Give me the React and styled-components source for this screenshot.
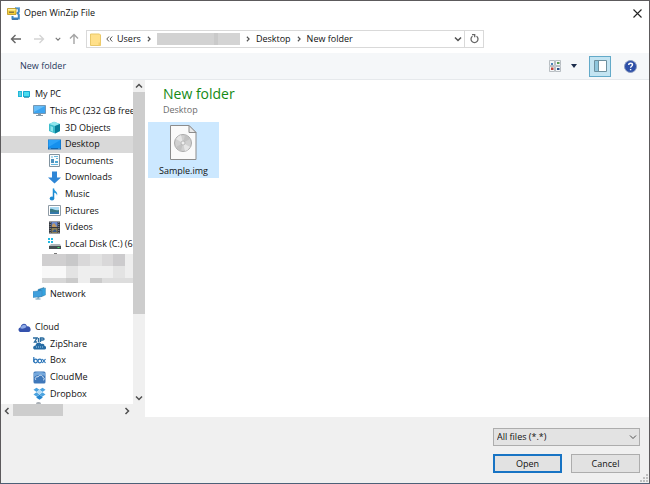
import React from 'react';
import styled, { createGlobalStyle } from 'styled-components';

const GlobalStyle = createGlobalStyle`
  * {
    box-sizing: border-box;
  }

  body {
    margin: 0;
    font-family: 'Open Sans', 'Noto Sans', sans-serif;
    font-size: 9px;
    line-height: 16px;
    color: #111;
  }

  button, select {
    font: inherit;
    color: inherit;
  }

  ul {
    list-style: none;
    margin: 0;
    padding: 0;
  }

  svg {
    display: block;
    flex: none;
  }
`;

const Dialog = styled.div`
  height: 100vh;
  display: flex;
  flex-direction: column;
  background: #fff;
  border: 1px solid #5c5a5c;
  border-bottom-color: #4c6078;
`;

const TitleBar = styled.header`
  display: flex;
  align-items: center;
  height: 24px;
  padding: 0 6px;
`;

const Title = styled.h1`
  flex: 1;
  margin: 0 0 0 4px;
  font-size: 9px;
  font-weight: 400;
`;

const IconButton = styled.button`
  display: flex;
  align-items: center;
  justify-content: center;
  width: ${props => props.$width || 12}px;
  height: 20px;
  padding: 0;
  border: 0;
  background: none;
`;

const NavBar = styled.nav`
  display: flex;
  align-items: center;
  height: 28px;
  padding: 0 8px;
`;

const AddressBar = styled.div`
  display: flex;
  align-items: center;
  flex: 0 1 398px;
  height: 18px;
  padding-left: 3px;
  border: 1px solid #d9d9d9;
`;

const Crumb = styled.button`
  border: 0;
  padding: 0;
  background: none;
  white-space: nowrap;
`;

const Separator = styled.span`
  display: flex;
  justify-content: center;
  width: 16px;
`;

const Redacted = styled.div`
  width: 83px;
  height: 12px;
  background: linear-gradient(90deg, #d2d2d2 0 57px, #c9c9c9 57px 61px, #d4d4d4 61px);
`;

const Spacer = styled.div`
  flex: 1;
`;

const Refresh = styled(IconButton)`
  height: 16px;
  border-left: 1px solid #d9d9d9;
`;

const Toolbar = styled.div`
  display: flex;
  align-items: center;
  height: 27px;
  padding: 0 12px 0 19px;
  background: #f5f7f9;
  border-bottom: 1px solid #e6e9ec;
`;

const ToolbarButton = styled.button`
  border: 0;
  padding: 0;
  background: none;
  color: #26375c;
`;

const PaneToggle = styled(IconButton)`
  height: 21px;
  margin: 0 13px 0 2px;
  border: 1px solid #63aac9;
  background: #c3e4f2;
`;

const Body = styled.div`
  display: flex;
  flex: 1;
  min-height: 0;
`;

const Sidebar = styled.aside`
  display: grid;
  grid-template-columns: 1fr 12px;
  grid-template-rows: 1fr 13px;
  width: 144px;
`;

const TreeView = styled.div`
  min-width: 0;
  overflow: hidden;
  padding-top: 6px;
  display: flex;
  flex-direction: column;
`;

const Tree = styled.ul`
  flex: 1;
  display: grid;
  grid-auto-rows: 1fr;
`;

const TreeItem = styled.li`
  display: flex;
  align-items: center;
  gap: 4px;
  min-height: 0;
  padding-left: ${props => 17 + props.$level * 15}px;
  background: ${props => (props.$selected ? '#d9d9d9' : 'none')};
  white-space: nowrap;
`;

const RedactedItem = styled.li`
  grid-row: span 2;
  min-height: 0;
  padding: 1px 0 0 41px;
`;

const NextItem = styled.div`
  width: 5px;
  height: 2px;
  margin-left: 35px;
  border-radius: 2px 2px 0 0;
  background: #aab0b6;
`;

const Scroll = styled.div`
  display: flex;
  flex-direction: ${props => (props.$horizontal ? 'row' : 'column')};
  align-items: center;
  background: #f0f0f0;
`;

const ScrollButton = styled(IconButton)`
  width: 12px;
  height: 12px;
`;

const Track = styled.div`
  flex: 1;
  align-self: stretch;
`;

const Thumb = styled.div`
  width: ${props => (props.$horizontal ? '46%' : '100%')};
  height: ${props => (props.$horizontal ? '12px' : '74%')};
  background: #cdcdcd;
`;

const Corner = styled.div`
  background: #f0f0f0;
`;

const Files = styled.main`
  flex: 1;
  padding: 4px 3px;
`;

const FolderName = styled.h2`
  margin: 0 0 0 15px;
  font-size: 14px;
  line-height: 19px;
  font-weight: 400;
  color: #148a14;
`;

const FolderPath = styled.p`
  margin: 0 0 5px 15px;
  line-height: 14px;
  color: #6d6d6d;
`;

const FileTile = styled.button`
  display: flex;
  flex-direction: column;
  align-items: center;
  gap: 3px;
  width: 71px;
  height: 56px;
  padding: 3px 0 0;
  border: 0;
  background: #cce8ff;
`;

const Footer = styled.footer`
  display: flex;
  flex-direction: column;
  align-items: flex-end;
  gap: 8px;
  padding: 11px 9px 10px;
  background: #f0f0f0;
  position: relative;
`;

const SelectWrap = styled.label`
  display: grid;
  align-items: center;
  width: 147px;

  > * {
    grid-area: 1 / 1;
  }

  svg {
    justify-self: end;
    margin-right: 3px;
    pointer-events: none;
  }
`;

const FileType = styled.select`
  appearance: none;
  width: 100%;
  height: 18px;
  padding: 0 3px;
  border: 1px solid #adadad;
  border-radius: 0;
  background: #e3e3e3;
`;

const Actions = styled.div`
  display: flex;
  gap: 9px;
`;

const ActionButton = styled.button`
  width: 69px;
  height: 19px;
  padding: 0;
  line-height: 14px;
  border: ${props => (props.$primary ? '2px solid #1874c4' : '1px solid #adadad')};
  background: #e2e2e2;
`;

const Grip = styled.svg`
  position: absolute;
  right: 1px;
  bottom: 1px;
`;

const chevrons = {
  up: 'M1 5.5 4 2.5 7 5.5',
  down: 'M1 2.5 4 5.5 7 2.5',
  left: 'M5.5 1 2.5 4 5.5 7',
  right: 'M2.5 1 5.5 4 2.5 7',
};

const Chevron = ({ dir, size = 8, color = '#505050', weight = 1.5 }) => (
  <svg width={size} height={size} viewBox="0 0 8 8" fill="none" stroke={color} strokeWidth={weight}>
    <path d={chevrons[dir]} />
  </svg>
);

const DoubleChevron = () => (
  <svg width="7" height="6" viewBox="0 0 7 6" fill="none" stroke="#555">
    <path d="M3 .5.8 3 3 5.5M6.2.5 4 3l2.2 2.5" />
  </svg>
);

const Arrow = ({ color, rotate = 0 }) => (
  <svg width="12" height="12" viewBox="0 0 12 12" fill="none" stroke={color} strokeWidth="1.4">
    <path d="M11 6H1.5M5.5 2 1.5 6l4 4" transform={`rotate(${rotate} 6 6)`} />
  </svg>
);

const glyphs = {
  myPc: (
    <>
      <rect x="0" y="3" width="4" height="6" fill="#21b8d8" />
      <rect x="5" y="3" width="7" height="6" rx=".5" fill="#18a8cf" />
      <rect x="6" y="4" width="5" height="4" fill="#49dcf0" />
      <path d="M6 9.5h5" stroke="#5ba9bd" />
      <path d="M1 5h2M1 7h2" stroke="#c3f4fc" strokeWidth=".7" />
    </>
  ),
  pc: (
    <>
      <path d="M.5 1.5h12v8h-12z" fill="#3ca4f0" stroke="#637f95" strokeWidth=".7" />
      <path d="M1 2h11L1 8z" fill="#68bdf7" />
      <path d="M5 10h3v1h2v1H3v-1h2z" fill="#8599a8" />
    </>
  ),
  cube: (
    <>
      <path d="M1 3 6 .7l6 2.2v7L7 12.5 1 10z" fill="#3cbccb" />
      <path d="M1 3 6 .7l6 2.2-5 2z" fill="#8fe7ee" />
      <path d="M7 5v7.5l5-2.6v-7z" fill="#087e99" />
      <path d="M2.5 5 5 6v4.8L2.5 9.7z" fill="#8ae4ec" />
    </>
  ),
  desktop: (
    <>
      <path d="M0 1.5h13v10H0z" fill="#1467af" />
      <path d="M.5 2h12v8H.5z" fill="#1590ee" />
      <path d="M.5 2h12l-12 7z" fill="#2ba2f8" />
      <path d="M1 10.8h2M10 10.8h2" stroke="#79bce8" strokeWidth=".7" />
    </>
  ),
  documents: (
    <>
      <path d="M1.5.5h10v12h-10z" fill="#f9fbfc" stroke="#81939f" />
      <path d="M3 3h2M6 2.5h4M8 4.5h2M3 10.5h7" stroke="#67b6dd" />
      <path d="M3 5h3v4H3z" fill="#4c91bd" />
      <path d="M7 7h3v2H7z" fill="#4fa8d2" />
    </>
  ),
  downloads: <path d="M4 .5h5v6h4l-6.5 6-6.5-6h4z" fill="#2f86d6" />,
  music: (
    <>
      <path d="M5.5.5V10" stroke="#1c89d2" strokeWidth="1.5" />
      <path d="M5.5 0c.5 3 5 3.5 3.5 7.8 0-2-1.4-3-3.5-3.4z" fill="#2798dd" />
      <ellipse cx="4" cy="10.5" rx="2.3" ry="1.9" fill="#1c89d2" />
    </>
  ),
  pictures: (
    <>
      <path d="M.5 1.5h12v10H.5z" fill="#fff" stroke="#8f9ba5" />
      <path d="M2 3h9v7H2z" fill="#a9daf3" />
      <path d="M2 5c3-1 4 2 9 1v4H2z" fill="#397985" />
      <path d="M2 8h9v2H2z" fill="#3478a9" />
    </>
  ),
  videos: (
    <>
      <path d="M1 .5h11v12H1z" fill="#34373e" />
      <path d="M3.5 1h6v5h-6z" fill="#6b8bd0" />
      <path d="M3.5 7h6v5h-6z" fill="#8d8056" />
      <path d="m4 4 2-2 3 4H4z" fill="#c29a62" />
      <path d="m4 11 3-3 2 3z" fill="#34588c" />
      <path d="M2.2 1v11M10.8 1v11" stroke="#9a9ea6" strokeDasharray="1 1" />
    </>
  ),
  disk: (
    <>
      <path d="M0 1h2v2H0zM3 1h2v2H3zM0 4h2v2H0zM3 4h2v2H3z" fill="#20b9e2" />
      <path d="m2 8 1-1h9l1 2v2H1V9z" fill="#aeb5b8" />
      <path d="M1 9h12v3H1z" fill="#454e51" />
      <path d="M9.5 10.5h2" stroke="#4de16e" />
    </>
  ),
  network: (
    <>
      <path d="m5 2.5 6-2v8l-6 2z" fill="#1584c9" stroke="#48809f" strokeWidth=".5" />
      <path d="m8 2 4.5-1v7L8 9.5z" fill="#35a3e0" stroke="#4c93b7" strokeWidth=".5" />
      <path d="m0 4.5 9-1v6l-9 1z" fill="#3f9fdc" stroke="#3a83b5" strokeWidth=".5" />
      <path d="M5 10v2M2.5 12h5" stroke="#6796b2" />
    </>
  ),
  cloud: (
    <>
      <path d="M3 11C0 11-.5 7 2.5 6.5 3 2 8 1.5 9 5.2c4-.8 5 5.8 1.5 5.8z" fill="#3552ad" />
      <path d="M2.5 7.5C3.5 3.5 7.5 2.5 8.5 6c-2 1.7-4 1.8-6 1.5" fill="#8fabe7" />
    </>
  ),
  zipShare: (
    <>
      <path d="M0 1h4L1.5 5H4M5.5 1v4M7.5 5V1h2c2 0 2 2 0 2h-2" fill="none" stroke="#286a9e" strokeWidth="1.4" />
      <path d="M2 12.5c-2.5 0-2.5-4 .5-4C3 5 7 4.5 8.5 7c2-.5 3 .5 3 2 2.5 0 2 3.5 0 3.5z" fill="#276ca4" />
      <path d="M3 10h7" stroke="#a8d1ed" strokeDasharray="1 1" />
    </>
  ),
  box: (
    <g fill="none" stroke="#2873b8" strokeWidth="1.2">
      <path d="M.8 3v5" />
      <circle cx="2.6" cy="7" r="1.8" />
      <circle cx="6.8" cy="7" r="1.8" />
      <path d="m9.3 5 3.2 4M12.5 5 9.3 9" />
    </g>
  ),
  cloudMe: (
    <>
      <rect x=".5" y=".5" width="12" height="12" rx="1.5" fill="#3f78ba" />
      <path d="M1 2q5-2 11 0v3Q6 2 1 6z" fill="#75a8dc" />
      <path d="M3 9C1 7 4 5 5 6c1-3 5-2 5 .5 2 .5 1.5 2.5 0 2.5" fill="none" stroke="#d9eafa" />
    </>
  ),
  dropbox: (
    <>
      <path d="m3.5.8 3 2-3 2.2-3-2.2zm6 0 3 2-3 2.2-3-2.2zm-6 4.4 3 2.2-3 2-3-2zm6 0 3 2.2-3 2-3-2z" fill="#4ba3e0" />
      <path d="m6.5 2.8 3 2.3-3 2.3-3-2.3z" fill="#b5dcf6" />
      <path d="m3.5 9.8 3-2 3 2v1l-3 1.9-3-1.9z" fill="#2385cf" />
    </>
  ),
};

const Glyph = ({ name }) => (
  <svg width="13" height="13" viewBox="0 0 13 13">{glyphs[name]}</svg>
);

const WinZipLogo = () => (
  <svg width="13" height="13" viewBox="0 0 13 13">
    <path d="M8 1.2h3.8v3.6L10.5 6l1.300 1.500v4H5.500V9" fill="none" stroke="#3f86c4" strokeWidth="2" />
    <path d="M8.500.7h4" stroke="#9cc8ea" strokeWidth=".8" />
    <path d="M.5 1.500H9v6H.5z" fill="#f4cf3c" stroke="#b8921c" strokeWidth=".8" />
    <path d="M1 2h7.500v1.500H1z" fill="#fff1a0" />
    <path d="M2 4.500h5v1.500H2z" fill="#8b7a3d" />
    <path d="M5 12.300h6" stroke="#2a639b" />
  </svg>
);

const FolderIcon = () => (
  <svg width="11" height="13" viewBox="0 0 11 13">
    <path d="M.5 1h9l1 1v10.5H.5z" fill="#ffe08a" stroke="#e9c869" />
    <path d="M8.5 9.5h2v3h-2z" fill="#f2cf6c" />
  </svg>
);

const RefreshIcon = () => (
  <svg width="9" height="10" viewBox="0 0 9 10" fill="none" stroke="#666" strokeWidth="1.3">
    <path d="M6.5 2.2A3.5 3.5 0 1 1 2.5 2.2" />
    <path d="M2 .7h2.7v2.6" />
  </svg>
);

const ViewIcon = () => (
  <svg width="12" height="12" viewBox="0 0 12 12">
    <path d="M.5.5h5v5h-5zM6.5.5h5v5h-5zM.5 6.5h5v5h-5zM6.5 6.5h5v5h-5z" fill="#f4f6f7" stroke="#a9b0b5" strokeWidth=".8" />
    <path d="M2 3h2v2H2z" fill="#4a83b8" />
    <path d="M8 2h2.5v2H8z" fill="#5a9b55" />
    <path d="M2 7.5h2.5V10H2z" fill="#bf4038" />
    <path d="M8 8h2.5v2H8z" fill="#294f87" />
  </svg>
);

const PaneIcon = () => (
  <svg width="13" height="12" viewBox="0 0 13 12">
    <path d="M.5.5h12v11H.5z" fill="#fff" stroke="#6d909f" />
    <path d="M1 1h3v10H1z" fill="#8fc6dd" />
    <path d="M4.5 1v10" stroke="#6d909f" />
  </svg>
);

const HelpIcon = () => (
  <svg width="13" height="13" viewBox="0 0 13 13">
    <circle cx="6.5" cy="6.5" r="6" fill="#2d4fa8" stroke="#8c9cc0" />
    <path d="M4.7 5c0-2.5 3.8-2.3 3.8-.2 0 1.5-1.9 1.4-1.9 3M6.6 9v1.3" fill="none" stroke="#fff" strokeWidth="1.4" />
  </svg>
);

const ImageFileIcon = () => (
  <svg width="27" height="35" viewBox="0 0 27 35">
    <path d="M.5.5H19l7 7v27H.5z" fill="#fafafa" stroke="#8c8c8c" />
    <path d="M19 .5v7h7z" fill="#e8e8e8" stroke="#8c8c8c" />
    <circle cx="13" cy="18" r="8.5" fill="#d0d0d0" stroke="#aaa" />
    <path d="m13 18-7-4a8 8 0 0 1 5-4zM13 18l7 4a8 8 0 0 1-5 4z" fill="#e6e6e6" />
    <path d="m13 18 2-8a8 8 0 0 1 5 4zM13 18l-2 8a8 8 0 0 1-5-4z" fill="#c2c2c2" />
    <circle cx="13" cy="18" r="2" fill="#eee" stroke="#aaa" strokeWidth=".7" />
  </svg>
);

const Mosaic = () => (
  <svg width="91" height="30" viewBox="0 0 91 30">
    <path d="M12 0h3v1h-3z" fill="#777" />
    <path d="M0 1h91v29H0z" fill="#eee" />
    <path d="M0 1h24v12H0z" fill="#d0cfd0" />
    <path d="M24 1h12v12H24z" fill="#c8c8c9" />
    <path d="M36 1h12v12H36zM60 1h11v12H60z" fill="#d9d8d9" />
    <path d="M48 1h12v12H48z" fill="#e2e2e2" />
    <path d="M71 1h12v12H71z" fill="#cccbcd" />
    <path d="M0 13h24v12H0z" fill="#f8f8f8" />
    <path d="M24 13h12v12H24zM71 13h12v12H71z" fill="#e3e3e3" />
    <path d="M0 25h24v5H0z" fill="#d7d7d7" />
    <path d="M24 25h12v5H24zM48 25h12v5H48z" fill="#cbcbcb" />
    <path d="M60 25h31v5H60z" fill="#ddd" />
  </svg>
);

const items = [
  { label: 'My PC', icon: 'myPc', level: 0 },
  { label: 'This PC (232 GB free', icon: 'pc', level: 1 },
  { label: '3D Objects', icon: 'cube', level: 2 },
  { label: 'Desktop', icon: 'desktop', level: 2, selected: true },
  { label: 'Documents', icon: 'documents', level: 2 },
  { label: 'Downloads', icon: 'downloads', level: 2 },
  { label: 'Music', icon: 'music', level: 2 },
  { label: 'Pictures', icon: 'pictures', level: 2 },
  { label: 'Videos', icon: 'videos', level: 2 },
  { label: 'Local Disk (C:) (6', icon: 'disk', level: 2 },
  { redacted: true },
  { label: 'Network', icon: 'network', level: 1 },
  { label: '', level: 0 },
  { label: 'Cloud', icon: 'cloud', level: 0 },
  { label: 'ZipShare', icon: 'zipShare', level: 1 },
  { label: 'Box', icon: 'box', level: 1 },
  { label: 'CloudMe', icon: 'cloudMe', level: 1 },
  { label: 'Dropbox', icon: 'dropbox', level: 1 },
];

const renderItem = (item, index) => {
  if (item.redacted) {
    return <RedactedItem key={index}><Mosaic /></RedactedItem>;
  }
  return (
    <TreeItem key={index} $level={item.level} $selected={item.selected}>
      {item.icon && <Glyph name={item.icon} />}
      {item.label}
    </TreeItem>
  );
};

const App = () => (
  <>
    <GlobalStyle />
    <Dialog>
      <TitleBar>
        <WinZipLogo />
        <Title>Open WinZip File</Title>
        <IconButton aria-label="Close">
          <svg width="9" height="9" viewBox="0 0 9 9" stroke="#222" strokeWidth="1.1">
            <path d="m.5.5 8 8m0-8-8 8" />
          </svg>
        </IconButton>
      </TitleBar>

      <NavBar>
        <IconButton $width={14} aria-label="Back"><Arrow color="#666" /></IconButton>
        <IconButton $width={32} aria-label="Forward"><Arrow color="#d4d4d4" rotate={180} /></IconButton>
        <IconButton $width={6} aria-label="Recent"><Chevron dir="down" size={6} color="#777" /></IconButton>
        <IconButton $width={25} aria-label="Up"><Arrow color="#a4a4a4" rotate={90} /></IconButton>
        <AddressBar>
          <FolderIcon />
          <Separator><DoubleChevron /></Separator>
          <Crumb>Users</Crumb>
          <Separator><Chevron dir="right" size={6} /></Separator>
          <Redacted />
          <Separator><Chevron dir="right" size={6} /></Separator>
          <Crumb>Desktop</Crumb>
          <Separator><Chevron dir="right" size={6} /></Separator>
          <Crumb>New folder</Crumb>
          <Spacer />
          <IconButton aria-label="Previous locations"><Chevron dir="down" /></IconButton>
          <Refresh $width={19} aria-label="Refresh"><RefreshIcon /></Refresh>
        </AddressBar>
      </NavBar>

      <Toolbar>
        <ToolbarButton>New folder</ToolbarButton>
        <Spacer />
        <IconButton aria-label="Change view"><ViewIcon /></IconButton>
        <IconButton $width={26} aria-label="More options">
          <svg width="6" height="4" viewBox="0 0 6 4"><path d="M0 0h6L3 4z" fill="#1c2c4c" /></svg>
        </IconButton>
        <PaneToggle $width={22} aria-label="Preview pane"><PaneIcon /></PaneToggle>
        <IconButton $width={13} aria-label="Help"><HelpIcon /></IconButton>
      </Toolbar>

      <Body>
        <Sidebar>
          <TreeView>
            <Tree>{items.map(renderItem)}</Tree>
            <NextItem />
          </TreeView>
          <Scroll>
            <ScrollButton aria-label="Scroll up"><Chevron dir="up" /></ScrollButton>
            <Track><Thumb /></Track>
            <ScrollButton aria-label="Scroll down"><Chevron dir="down" /></ScrollButton>
          </Scroll>
          <Scroll $horizontal>
            <ScrollButton aria-label="Scroll left"><Chevron dir="left" /></ScrollButton>
            <Track><Thumb $horizontal /></Track>
            <ScrollButton aria-label="Scroll right"><Chevron dir="right" /></ScrollButton>
          </Scroll>
          <Corner />
        </Sidebar>
        <Files>
          <FolderName>New folder</FolderName>
          <FolderPath>Desktop</FolderPath>
          <FileTile>
            <ImageFileIcon />
            Sample.img
          </FileTile>
        </Files>
      </Body>

      <Footer>
        <SelectWrap>
          <FileType aria-label="File type">
            <option>All files (*.*)</option>
          </FileType>
          <Chevron dir="down" weight={1} />
        </SelectWrap>
        <Actions>
          <ActionButton $primary>Open</ActionButton>
          <ActionButton>Cancel</ActionButton>
        </Actions>
        <Grip width="8" height="8" viewBox="0 0 8 8">
          <path d="M6 0h2v2H6zM3 3h2v2H3zM6 3h2v2H6zM0 6h2v2H0zM3 6h2v2H3zM6 6h2v2H6z" fill="#bfbfbf" />
        </Grip>
      </Footer>
    </Dialog>
  </>
);

export default App;
